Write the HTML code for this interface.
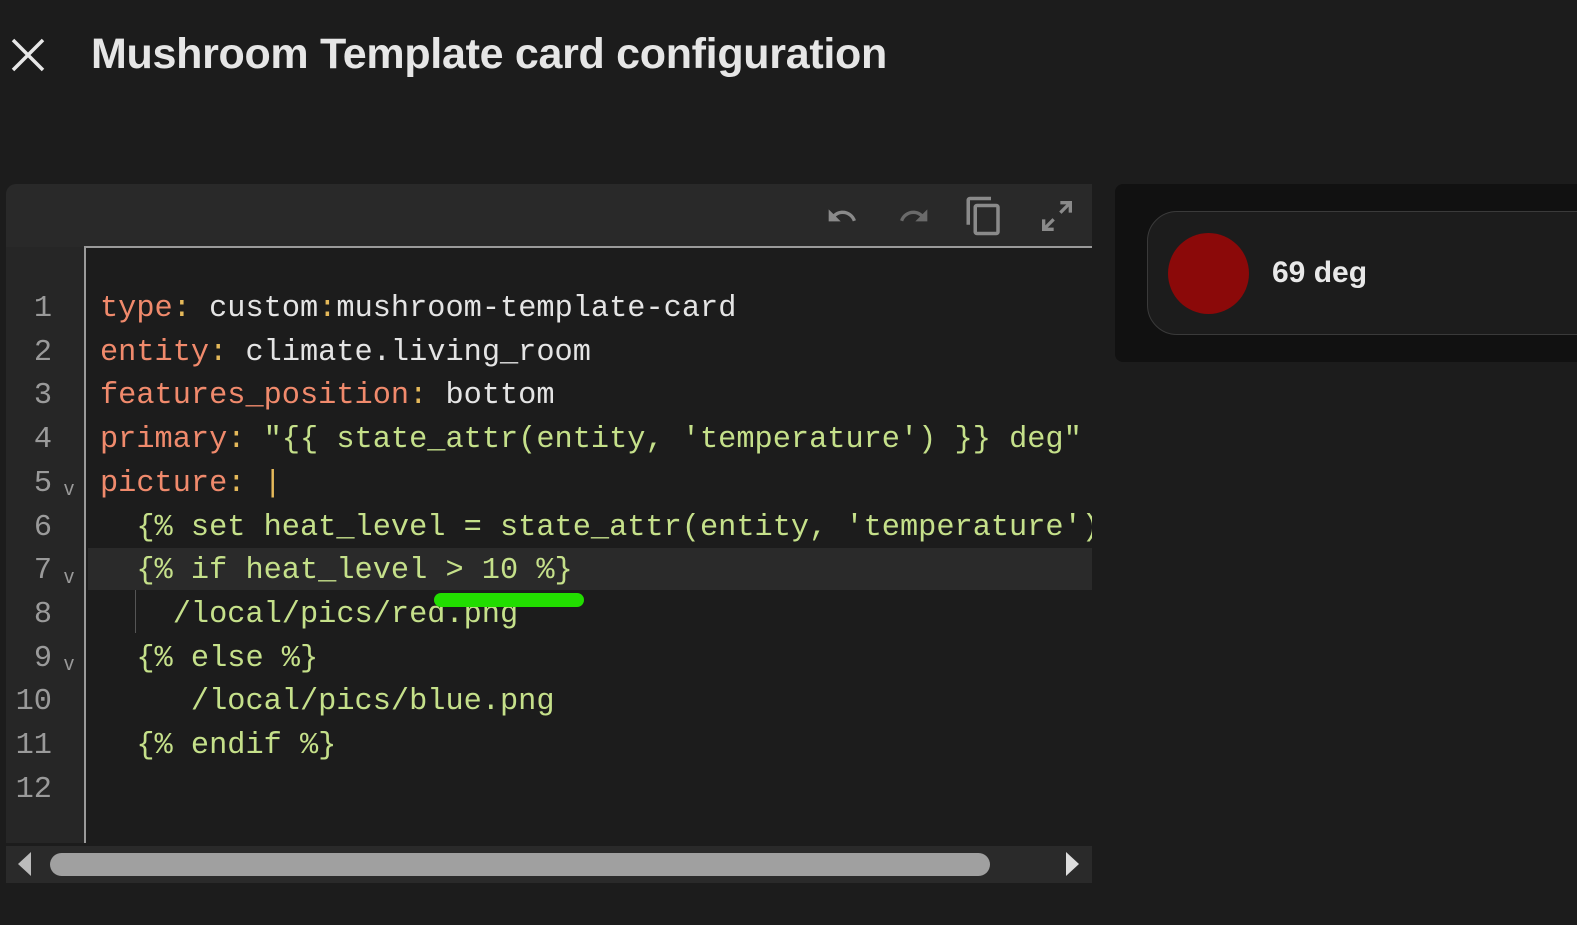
<!DOCTYPE html>
<html><head><style>
body{margin:0;width:1577px;height:925px;background:#1c1c1c;position:relative;overflow:hidden;font-family:"Liberation Sans",sans-serif}
.abs{position:absolute}
.code{font-family:"Liberation Mono",monospace;font-size:30.3px;white-space:pre;line-height:43.7px}
.k{color:#f08a6c}.c{color:#e5b95a}.v{color:#e4e4e4}.s{color:#c5e08a}
.ln{color:#9a9a9a;text-align:right;width:52px;left:0}
.fold{color:#999;font-size:20px;font-family:"Liberation Sans",sans-serif}
</style></head><body>
<svg class="abs" style="left:10px;top:37px" width="36" height="36" viewBox="0 0 36 36"><path d="M3 3L33 33M33 3L3 33" stroke="#e8e8e8" stroke-width="3.5"/></svg>
<div class="abs" style="left:91px;top:30px;font-size:43px;color:#e6e6e6;font-weight:bold;letter-spacing:-0.3px">Mushroom Template card configuration</div>

<div class="abs" style="left:6px;top:184px;width:1086px;height:699px;background:#1c1c1c;border-radius:10px 0 0 0;overflow:hidden">
 <div class="abs" style="left:0;top:0;width:1086px;height:63px;background:#292929"></div>
 <div class="abs" style="left:0;top:63px;width:79px;height:596px;background:#262626"></div>
 <div class="abs" style="left:79px;top:62px;width:1007px;height:2px;background:#9a9a9a"></div>
 <div class="abs" style="left:78px;top:62px;width:2px;height:597px;background:#9a9a9a"></div>
 <div class="abs" style="left:82px;top:364px;width:1004px;height:42px;background:#2a2a2a"></div>
 <div class="abs" style="left:129px;top:406px;width:1px;height:43px;background:#555"></div>
 <div class="abs" style="left:0;top:662px;width:1086px;height:37px;background:#2a2a2a"></div>
 <div class="abs" style="left:44px;top:669px;width:940px;height:23px;background:#a0a0a0;border-radius:12px"></div>
 <svg class="abs" style="left:12px;top:668px" width="14" height="24"><path d="M13 0L0 12L13 24Z" fill="#bbb"/></svg>
 <svg class="abs" style="left:1060px;top:668px" width="14" height="24"><path d="M0 0L13 12L0 24Z" fill="#ddd"/></svg>
</div>
<svg class="abs" style="left:822px;top:200px" width="40" height="32" viewBox="0 0 24 24"><path d="M12.5 8c-2.650 0-5.050.99-6.900 2.600L2 7v9h9l-3.620-3.620c1.390-1.160 3.160-1.880 5.120-1.880 3.540 0 6.550 2.310 7.600 5.500l2.370-.78C21.080 11.030 17.150 8 12.5 8z" fill="#8a8a8a"/></svg>
<svg class="abs" style="left:894px;top:200px" width="40" height="32" viewBox="0 0 24 24"><path d="M18.4 10.6C16.55 8.99 14.15 8 11.5 8c-4.65 0-8.58 3.03-9.96 7.22L3.9 16c1.05-3.19 4.05-5.5 7.6-5.5 1.95 0 3.73.72 5.12 1.88L13 16h9V7l-3.6 3.6z" fill="#6a6a6a"/></svg>
<svg class="abs" style="left:963px;top:195px" width="42" height="42" viewBox="0 0 24 24"><path d="M16 1H4c-1.1 0-2 .9-2 2v14h2V3h12V1zm3 4H8c-1.1 0-2 .9-2 2v14c0 1.1.9 2 2 2h11c1.1 0 2-.9 2-2V7c0-1.1-.9-2-2-2zm0 16H8V7h11v14z" fill="#8a8a8a"/></svg>
<svg class="abs" style="left:1037px;top:196px" width="40" height="40" viewBox="0 0 24 24"><path d="M21 3v7h-2V6.4l-4.3 4.3-1.4-1.4L17.6 5H14V3h7zM3 21v-7h2v3.6l4.3-4.3 1.4 1.4L6.4 19H10v2H3z" fill="#8a8a8a"/></svg>

<div class="abs code ln" style="top:288px">1
2
3
4
5
6
7
8
9
10
11
12</div>
<div class="abs fold" style="left:64px;top:478px">v</div>
<div class="abs fold" style="left:64px;top:566px">v</div>
<div class="abs fold" style="left:64px;top:653px">v</div>
<div class="abs code" style="left:100px;top:288px"><span class="k">type</span><span class="c">:</span><span class="v"> custom</span><span class="c">:</span><span class="v">mushroom-template-card</span>
<span class="k">entity</span><span class="c">:</span><span class="v"> climate.living_room</span>
<span class="k">features_position</span><span class="c">:</span><span class="v"> bottom</span>
<span class="k">primary</span><span class="c">:</span><span class="s"> "{{ state_attr(entity, 'temperature') }} deg"</span>
<span class="k">picture</span><span class="c">: |</span>
<span class="s">  {% set heat_level = state_attr(entity, 'temperature')</span>
<span class="s">  {% if heat_level &gt; 10 %}</span>
<span class="s">    /local/pics/red.png</span>
<span class="s">  {% else %}</span>
<span class="s">     /local/pics/blue.png</span>
<span class="s">  {% endif %}</span>
</div>
<div class="abs" style="left:1092px;top:184px;width:23px;height:741px;background:#1c1c1c"></div>
<div class="abs" style="left:434px;top:593px;width:150px;height:14px;background:#22dd00;border-radius:7px"></div>

<div class="abs" style="left:1115px;top:184px;width:470px;height:178px;background:#111;border-radius:8px"></div>
<div class="abs" style="left:1147px;top:211px;width:460px;height:122px;background:#1c1c1c;border:1.5px solid #3a3a3a;border-radius:30px"></div>
<div class="abs" style="left:1168px;top:233px;width:81px;height:81px;border-radius:50%;background:#8b0909"></div>
<div class="abs" style="left:1272px;top:256px;font-size:30px;color:#e8e8e8;font-weight:bold">69 deg</div>
</body></html>
